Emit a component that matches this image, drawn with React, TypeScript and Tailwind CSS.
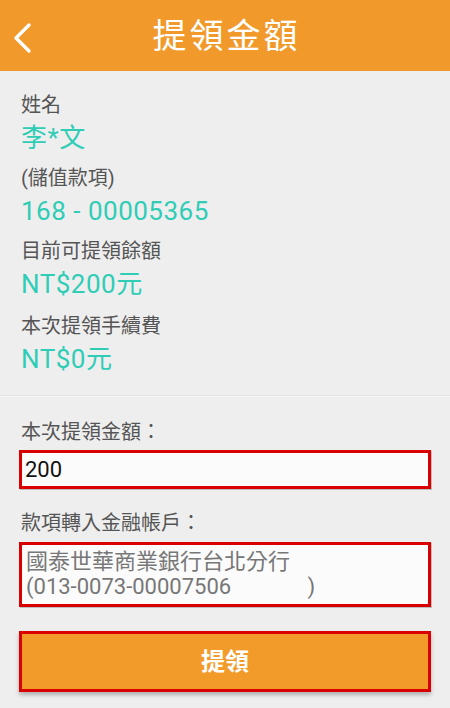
const font = { fontFamily: "Roboto, 'Noto Sans CJK TC', sans-serif" }

function InfoRow({ label, value }: { label: string; value: string }) {
  return (
    <div className="pb-[12px]">
      <div className="text-[20px] leading-[24px] text-[#555555]">{label}</div>
      <div className="mt-[5px] text-[26px] leading-[32px] tracking-[0.5px] text-[#2fcdb6]">{value}</div>
    </div>
  )
}

export default function App() {
  return (
    <div className="w-[450px] h-[708px] bg-[#eeeeee] overflow-hidden" style={font}>
      {/* Header */}
      <div className="relative h-[71px] bg-[#f19a2b] flex items-center justify-center">
        <button className="absolute left-[10px] top-[20px] p-[2px]">
          <svg width="20" height="32" viewBox="0 0 20 32" fill="none">
            <path d="M17 3 L4 16 L17 29" stroke="white" strokeWidth="3.4" strokeLinecap="round" strokeLinejoin="round" />
          </svg>
        </button>
        <h1 className="text-[34px] leading-none text-white tracking-[3px] pl-[3px]">提領金額</h1>
      </div>

      {/* Account info */}
      <div className="px-[21px] pt-[22px] pb-[8px] border-b border-[#e2e2e2]">
        <InfoRow label="姓名" value="李*文" />
        <InfoRow label="(儲值款項)" value="168 - 00005365" />
        <InfoRow label="目前可提領餘額" value="NT$200元" />
        <div className="pt-[2px]">
          <InfoRow label="本次提領手續費" value="NT$0元" />
        </div>
      </div>

      {/* Form */}
      <div className="px-[19px] pt-[23px] border-t border-[#f6f6f6]">
        <div className="pl-[2px] text-[20px] leading-[24px] text-[#555555]">本次提領金額：</div>
        <div className="mt-[6px] h-[39px] border-[3px] border-[#d80000] bg-[#fbfbfb] shadow-[1px_1px_0_#bdbdbd] flex items-center px-[3px]">
          <span className="text-[22px] text-[#111111]">200</span>
        </div>

        <div className="mt-[22px] pl-[2px] text-[20px] leading-[24px] text-[#555555]">款項轉入金融帳戶：</div>
        <div className="mt-[7px] h-[65px] border-[3px] border-[#d80000] bg-[#fbfbfb] shadow-[1px_1px_0_#bdbdbd] px-[4px] pt-[4px]">
          <div className="text-[22px] leading-[25px] text-[#777777] whitespace-pre">國泰世華商業銀行台北分行</div>
          <div className="text-[22px] leading-[25px] text-[#777777] whitespace-pre">(013-0073-00007506              )</div>
        </div>

        <button className="mt-[24px] w-full h-[61px] border-[3px] border-[#d80000] bg-[#f29b2b] shadow-[0_3px_4px_rgba(0,0,0,0.25)] text-white text-[24px] font-bold">
          提領
        </button>
      </div>
    </div>
  )
}
